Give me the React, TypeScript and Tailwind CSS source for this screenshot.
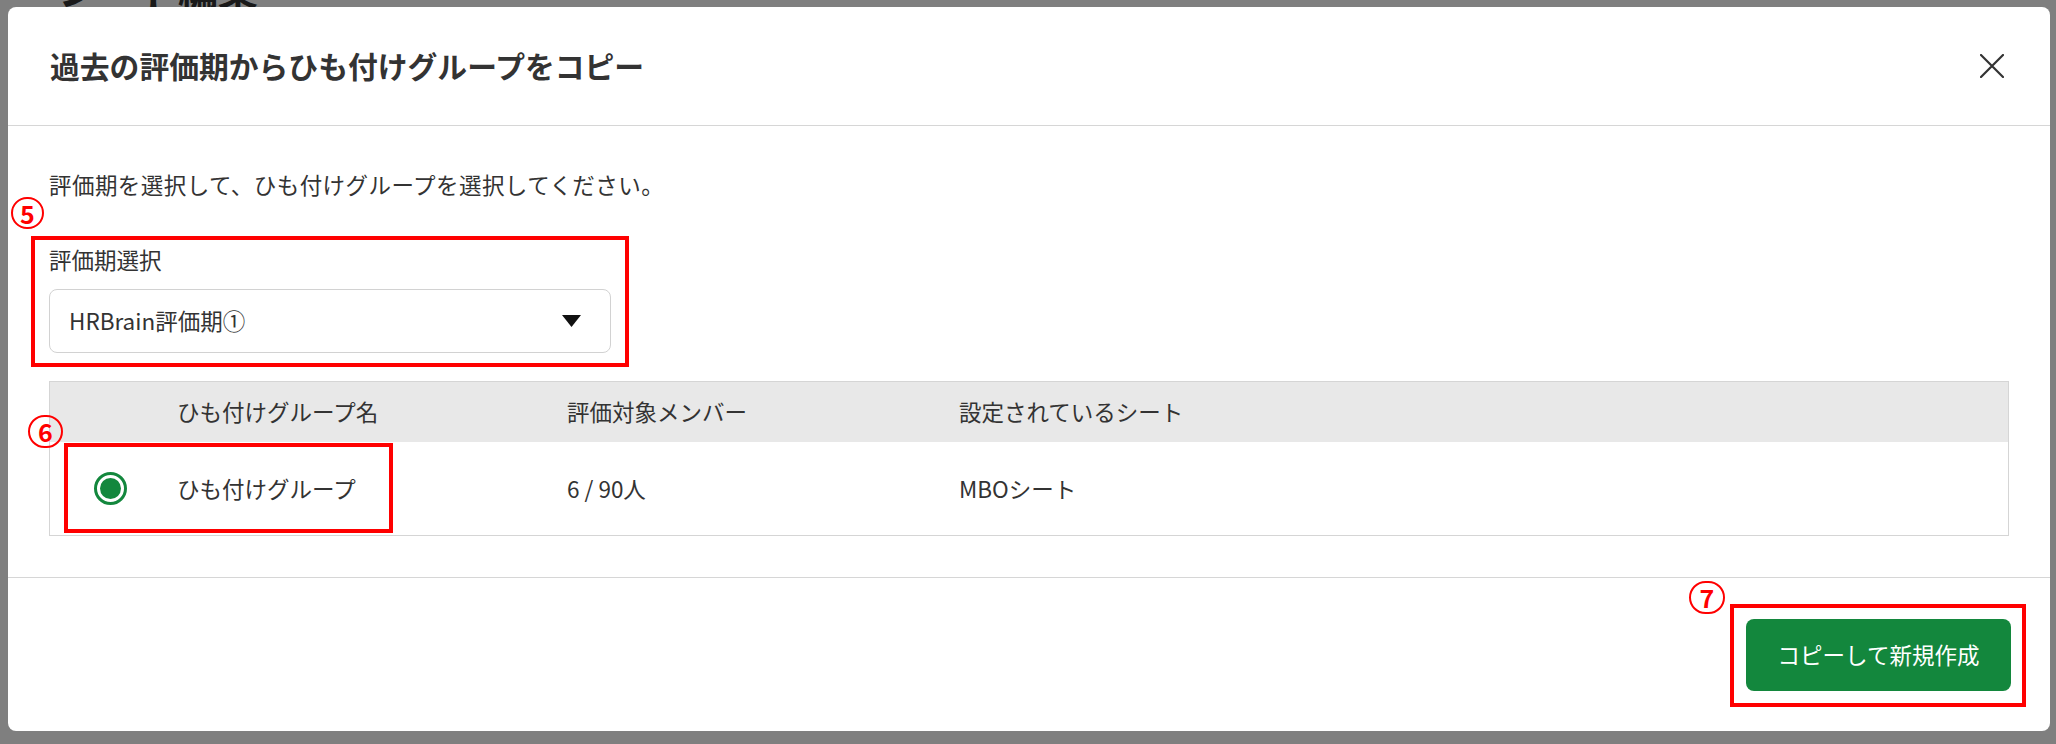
import type { ReactNode } from 'react';

function Mark({ n, className }: { n: string; className: string }) {
  return (
    <span
      className={`absolute flex items-center justify-center rounded-full border-[2.5px] border-[#ff0000] text-[25px] font-bold leading-none text-[#ff0000] ${className}`}
    >
      {n}
    </span>
  );
}

function RedBox({ className }: { className: string }) {
  return <span className={`pointer-events-none absolute border-[4px] border-[#ff0000] ${className}`} />;
}

function Cell({ children, className = '' }: { children?: ReactNode; className?: string }) {
  return <div className={`flex items-center ${className}`}>{children}</div>;
}

export default function App() {
  return (
    <div className="relative h-[744px] w-[2056px] overflow-hidden bg-white font-['Noto_Sans_CJK_JP',sans-serif] text-[#333]">
      {/* page behind the overlay */}
      <div className="absolute left-[58px] top-[-32px] text-[40px] font-bold leading-none text-[#333]">シート編集</div>
      <div className="absolute inset-0 bg-black/50" />

      <div className="relative pl-[8px] pt-[7px]">
        <div className="flex h-[724px] w-[2042px] flex-col rounded-[8px] bg-white">
          <header className="flex h-[119px] shrink-0 items-center justify-between border-b border-[#d6d6d6] pl-[42px] pr-[46px]">
            <h2 className="text-[29.8px] font-bold leading-none">過去の評価期からひも付けグループをコピー</h2>
            <svg width="24" height="24" viewBox="0 0 24 24" className="text-[#333]">
              <path d="M1 1L23 23M23 1L1 23" stroke="currentColor" strokeWidth="2.2" strokeLinecap="round" />
            </svg>
          </header>

          <div className="flex-1 px-[41px] pt-[42px]">
            <p className="text-[22.5px] leading-[32px] tracking-[0.45px]">評価期を選択して、ひも付けグループを選択してください。</p>

            <div className="relative mt-[43px] w-[562px]">
              <Mark n="5" className="left-[-38px] top-[-46px] h-[32px] w-[33px]" />
              <RedBox className="-left-[18px] -right-[18px] top-[-7px] bottom-[-14px]" />
              <label className="block text-[22.5px] leading-[32px]">評価期選択</label>
              <div className="mt-[14px] flex h-[64px] items-center justify-between rounded-[8px] border border-[#d2d2d2] pl-[19px] pr-[29px]">
                <span className="text-[22.5px]">HRBrain評価期①</span>
                <svg width="19" height="12" viewBox="0 0 19 12">
                  <polygon points="0,0 19,0 9.5,12" fill="#111" />
                </svg>
              </div>
            </div>

            <div className="relative mt-[28px] border border-[#d5d5d5] text-[22.5px]">
              <Mark n="6" className="left-[-22px] top-[33px] h-[33px] w-[35px]" />
              <div className="grid h-[60px] grid-cols-[127px_390px_392px_1fr] bg-[#e8e8e8]">
                <Cell />
                <Cell>ひも付けグループ名</Cell>
                <Cell>評価対象メンバー</Cell>
                <Cell>設定されているシート</Cell>
              </div>
              <div className="relative grid h-[93px] grid-cols-[127px_390px_392px_1fr]">
                <RedBox className="left-[14px] top-[1px] h-[90px] w-[329px]" />
                <Cell className="pl-[44px]">
                  <span className="flex h-[33px] w-[33px] items-center justify-center rounded-full border-[3px] border-[#13873d]">
                    <span className="h-[21px] w-[21px] rounded-full bg-[#13873d]" />
                  </span>
                </Cell>
                <Cell>ひも付けグループ</Cell>
                <Cell>6 / 90人</Cell>
                <Cell>MBOシート</Cell>
              </div>
            </div>
          </div>

          <footer className="flex h-[154px] shrink-0 items-start justify-end border-t border-[#d6d6d6] pr-[39px] pt-[41px]">
            <div className="relative">
              <Mark n="7" className="left-[-57px] top-[-38px] h-[33px] w-[36px]" />
              <RedBox className="-left-[16px] -right-[15px] -top-[15px] -bottom-[16px]" />
              <button className="h-[72px] w-[265px] rounded-[8px] bg-[#13873d] text-[22.5px] text-white">コピーして新規作成</button>
            </div>
          </footer>
        </div>
      </div>
    </div>
  );
}
